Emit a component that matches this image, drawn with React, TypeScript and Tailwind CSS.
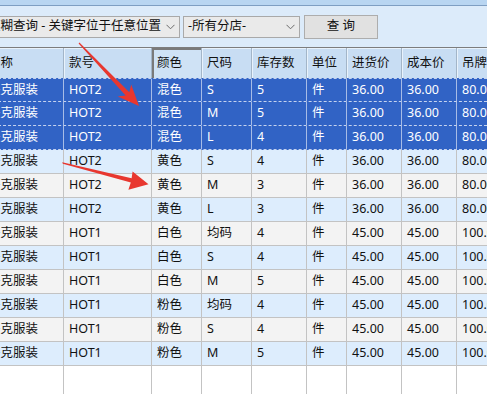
import React from "react";

const FONT = { fontFamily: '"Noto Sans", "Noto Sans CJK SC", sans-serif' };
const GRID = "grid grid-cols-[81px_88px_50px_50px_55px_40px_55px_55px_60px]";

type Row = { name: string; code: string; color: string; size: string; qty: string; unit: string; buy: string; cost: string; tag: string; sel?: boolean };

const rows: Row[] = [
  { name: "夹克服装", code: "HOT2", color: "混色", size: "S", qty: "5", unit: "件", buy: "36.00", cost: "36.00", tag: "80.00", sel: true },
  { name: "夹克服装", code: "HOT2", color: "混色", size: "M", qty: "5", unit: "件", buy: "36.00", cost: "36.00", tag: "80.00", sel: true },
  { name: "夹克服装", code: "HOT2", color: "混色", size: "L", qty: "4", unit: "件", buy: "36.00", cost: "36.00", tag: "80.00", sel: true },
  { name: "夹克服装", code: "HOT2", color: "黄色", size: "S", qty: "4", unit: "件", buy: "36.00", cost: "36.00", tag: "80.00" },
  { name: "夹克服装", code: "HOT2", color: "黄色", size: "M", qty: "3", unit: "件", buy: "36.00", cost: "36.00", tag: "80.00" },
  { name: "夹克服装", code: "HOT2", color: "黄色", size: "L", qty: "3", unit: "件", buy: "36.00", cost: "36.00", tag: "80.00" },
  { name: "夹克服装", code: "HOT1", color: "白色", size: "均码", qty: "4", unit: "件", buy: "45.00", cost: "45.00", tag: "100.00" },
  { name: "夹克服装", code: "HOT1", color: "白色", size: "S", qty: "4", unit: "件", buy: "45.00", cost: "45.00", tag: "100.00" },
  { name: "夹克服装", code: "HOT1", color: "白色", size: "M", qty: "5", unit: "件", buy: "45.00", cost: "45.00", tag: "100.00" },
  { name: "夹克服装", code: "HOT1", color: "粉色", size: "均码", qty: "4", unit: "件", buy: "45.00", cost: "45.00", tag: "100.00" },
  { name: "夹克服装", code: "HOT1", color: "粉色", size: "S", qty: "4", unit: "件", buy: "45.00", cost: "45.00", tag: "100.00" },
  { name: "夹克服装", code: "HOT1", color: "粉色", size: "M", qty: "5", unit: "件", buy: "45.00", cost: "45.00", tag: "100.00" },
];

const headers = ["名称", "款号", "颜色", "尺码", "库存数", "单位", "进货价", "成本价", "吊牌价"];

function Chevron() {
  return (
    <svg width="9" height="6" viewBox="0 0 9 6" className="shrink-0">
      <polyline points="0.5,0.8 4.5,4.8 8.5,0.8" fill="none" stroke="#6b6b6b" strokeWidth="1" />
    </svg>
  );
}

export default function App() {
  return (
    <div className="relative w-[487px] h-[394px] overflow-hidden bg-[#dcebfa] text-[12.5px] text-[#111] flex flex-col" style={FONT}>
      {/* top band */}
      <div className="h-[6px] shrink-0 bg-[#b8d5f1] border-b border-[#7e9ec2]" />
      {/* toolbar */}
      <div className="h-[41px] shrink-0 flex items-center">
        <div className="ml-[-15px] w-[195px] h-[22px] border border-[#a9a9a9] bg-[#eaeaea] flex items-center pl-[2px] pr-[4px] whitespace-nowrap">
          <span className="flex-1 overflow-hidden">模糊查询 - 关键字位于任意位置</span>
          <Chevron />
        </div>
        <div className="ml-[3px] w-[117px] h-[22px] border border-[#a9a9a9] bg-[#eaeaea] flex items-center pl-[4px] pr-[4px] whitespace-nowrap">
          <span className="flex-1">-所有分店-</span>
          <Chevron />
        </div>
        <div className="ml-[4px] w-[74px] h-[24px] border border-[#adadad] bg-[#e1e1e1] flex items-center justify-center whitespace-pre">
          查 询
        </div>
      </div>
      {/* table */}
      <div className="flex-1 flex flex-col ml-[-17px] bg-white border-t border-[#7d7d7d]">
        <div className={`${GRID} h-[30px] shrink-0 bg-[#c8ddf3]`}>
          {headers.map((h, i) => (
            <div
              key={h}
              className={
                i === 2
                  ? "flex items-center pl-[5px] border-r border-[#a3b5c8] bg-[#cfe2f5] shadow-[inset_2px_2px_0_#7a7a7a] whitespace-nowrap overflow-hidden"
                  : "flex items-center pl-[5px] border-r border-[#a3b5c8] shadow-[inset_1px_1px_0_#e8f2fc] whitespace-nowrap overflow-hidden"
              }
            >
              {h}
            </div>
          ))}
        </div>
        {rows.map((r, idx) => {
          const vals = [r.name, r.code, r.color, r.size, r.qty, r.unit, r.buy, r.cost, r.tag];
          const rowCls = r.sel
            ? `${GRID} h-[24px] shrink-0 bg-[#3163c5] text-white border-b border-dashed border-[#c5d3ef]` + (idx === 0 ? " border-t" : "")
            : idx % 2 === 1
            ? `${GRID} h-[24px] shrink-0 bg-[#ddedfd] border-b border-[#c3c3c3]`
            : `${GRID} h-[24px] shrink-0 bg-[#f3f3f3] border-b border-[#c3c3c3]`;
          return (
            <div key={idx} className={rowCls}>
              {vals.map((v, j) => (
                <div
                  key={j}
                  className={
                    r.sel
                      ? "flex items-center pl-[5px] border-r border-[#a7bce6] whitespace-nowrap overflow-hidden"
                      : "flex items-center pl-[5px] border-r border-[#c3c3c3] whitespace-nowrap overflow-hidden"
                  }
                >
                  {v}
                </div>
              ))}
            </div>
          );
        })}
        <div className={`${GRID} flex-1`}>
          {headers.map((h) => (
            <div key={h} className="border-r border-[#c3c3c3]" />
          ))}
        </div>
      </div>
      {/* red arrows overlay */}
      <svg className="absolute inset-0 pointer-events-none" width="487" height="394" viewBox="0 0 487 394">
        <polygon
          fill="#e8372f"
          points="78.6,43.4 79.4,42.6 129.3,92.2 131.2,84.5 139,106 117.8,96.6 125.6,95.6"
        />
        <polygon
          fill="#e8372f"
          points="62.2,162.3 62.8,163.7 130.8,182.6 128.4,189.8 148.5,184.2 132.6,171.6 131.6,178.2"
        />
      </svg>
    </div>
  );
}
